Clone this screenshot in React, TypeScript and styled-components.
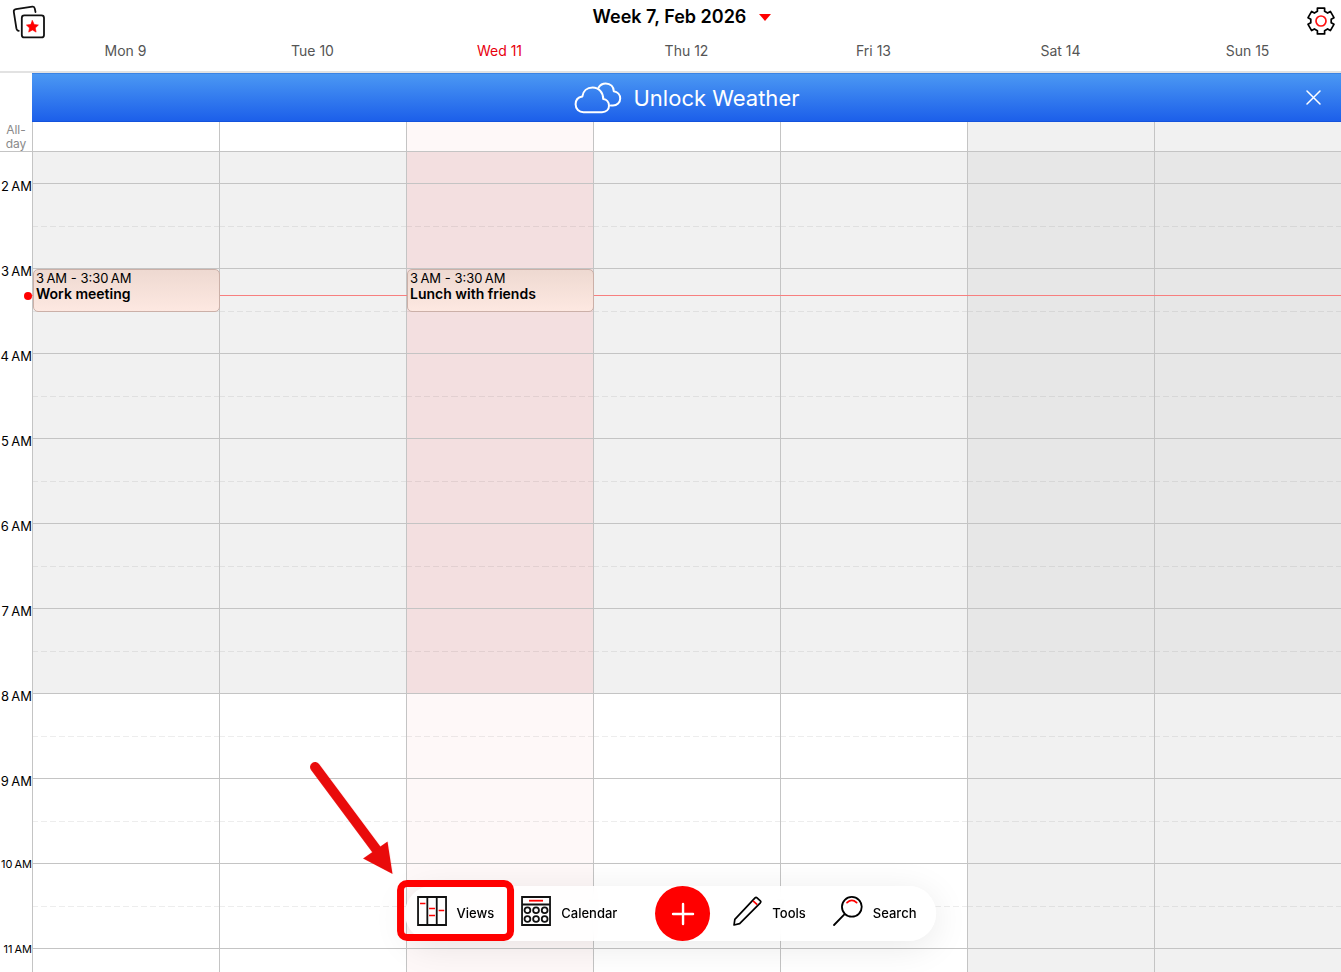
import React from "react";
import styled, { createGlobalStyle, css } from "styled-components";

const GlobalStyle = createGlobalStyle`
  *, *::before, *::after { box-sizing: border-box; }
  body {
    margin: 0;
    background: #fff;
    color: #000;
    font-family: Inter, Roboto, "Liberation Sans", sans-serif;
  }
  button {
    font: inherit;
    color: inherit;
    background: none;
    border: 0;
    padding: 0;
    cursor: pointer;
  }
  svg { display: block; flex: none; }
`;

type Tone = "plain" | "today" | "weekend";

const tones: Record<Tone, { open: string; closed: string }> = {
  plain: { open: "#ffffff", closed: "#f1f1f1" },
  today: { open: "#fef8f8", closed: "#f3dfe0" },
  weekend: { open: "#f1f1f1", closed: "#e7e7e7" },
};

const RED = "#ff0000";
const LINE = "#c4c4c4";
const HOUR = 85;
const LEAD = 32;

interface CalEvent {
  time: string;
  title: string;
  start: number;
  hours: number;
}

interface Day {
  label: string;
  tone: Tone;
  events: CalEvent[];
}

const SLOT = "3\u2009AM - 3:30\u2009AM";

const days: Day[] = [
  { label: "Mon 9", tone: "plain", events: [{ time: SLOT, title: "Work meeting", start: 3, hours: 0.5 }] },
  { label: "Tue 10", tone: "plain", events: [] },
  { label: "Wed 11", tone: "today", events: [{ time: SLOT, title: "Lunch with friends", start: 3, hours: 0.5 }] },
  { label: "Thu 12", tone: "plain", events: [] },
  { label: "Fri 13", tone: "plain", events: [] },
  { label: "Sat 14", tone: "weekend", events: [] },
  { label: "Sun 15", tone: "weekend", events: [] },
];

const hours = [2, 3, 4, 5, 6, 7, 8, 9, 10, 11];
const WORK_START = 8;

const offsetOf = (hour: number) => LEAD + (hour - 2) * HOUR;

const Page = styled.div`
  display: flex;
  flex-direction: column;
  height: 100vh;
  overflow: hidden;
`;

const Header = styled.header`
  flex: none;
  height: 73px;
  border-bottom: 2px solid #e2e2e2;
`;

const TitleBar = styled.div`
  display: grid;
  grid-template-columns: 1fr auto 1fr;
  height: 40px;
  padding: 5px 5px 0 12px;
`;

const IconButton = styled.button<{ $end?: boolean }>`
  justify-self: ${(p) => (p.$end ? "end" : "start")};
  align-self: start;
`;

const PeriodButton = styled.button`
  display: flex;
  align-items: center;
  gap: 13px;
  height: 24px;
  margin-left: 16px;
  font-size: 18px;
  font-weight: 600;
  line-height: 24px;
`;

const weekColumns = css`
  display: grid;
  grid-template-columns: repeat(7, 1fr);
`;

const DayNames = styled.div`
  ${weekColumns}
  margin-left: 32px;
`;

const DayName = styled.div<{ $today: boolean }>`
  text-align: center;
  font-size: 14px;
  line-height: 22px;
  color: ${(p) => (p.$today ? "#e8000d" : "#555")};
`;

const Banner = styled.section`
  flex: none;
  display: grid;
  grid-template-columns: 1fr auto 1fr;
  align-items: center;
  height: 49px;
  margin-left: 32px;
  color: #fff;
  background: linear-gradient(#4b98f3, #1c5fea);
  border-top: 1px solid #3a83e4;
  border-bottom: 1px solid #1453dc;
`;

const BannerAction = styled.button`
  grid-column: 2;
  display: flex;
  align-items: center;
  gap: 12px;
  font-size: 22px;
  line-height: 28px;
`;

const CloseButton = styled.button`
  justify-self: end;
  margin-right: 20px;
`;

const AllDayRow = styled.div`
  flex: none;
  display: grid;
  grid-template-columns: 32px 1fr;
  height: 30px;
  border-bottom: 1px solid ${LINE};
`;

const AllDayLabel = styled.div`
  padding-top: 1px;
  text-align: center;
  font-size: 12px;
  line-height: 14px;
  color: #8a8a8a;
`;

const Week = styled.div`
  ${weekColumns}
`;

const AllDayCell = styled.div<{ $tone: Tone }>`
  border-left: 1px solid ${LINE};
  background: ${(p) => tones[p.$tone].open};
`;

const Schedule = styled.main`
  position: relative;
  flex: 1;
  min-height: 0;
  display: grid;
  grid-template-columns: 32px 1fr;
  overflow: hidden;
`;

const Gutter = styled.div`
  padding-top: 26px;
`;

const HourLabel = styled.div<{ $small: boolean }>`
  height: ${HOUR}px;
  text-align: right;
  white-space: nowrap;
  font-size: ${(p) => (p.$small ? 11 : 13)}px;
  line-height: ${(p) => (p.$small ? 12 : 16)}px;
`;

const DayColumn = styled.div<{ $tone: Tone }>`
  position: relative;
  border-left: 1px solid ${LINE};
  background: ${(p) => tones[p.$tone].open};
`;

const HourCell = styled.div<{ $tone: Tone; $closed: boolean; $lead?: boolean }>`
  display: flex;
  flex-direction: column;
  height: ${(p) => (p.$lead ? LEAD : HOUR)}px;
  border-bottom: 1px solid ${LINE};
  background: ${(p) => tones[p.$tone][p.$closed ? "closed" : "open"]};
`;

const HalfHour = styled.div`
  height: 43px;
  border-bottom: 1px solid transparent;
  border-image: repeating-linear-gradient(90deg, rgba(0, 0, 0, 0.07) 0 6px, transparent 6px 9px) 1;
  border-image-width: 0 0 1px 0;
`;

const EventCard = styled.button<{ $start: number; $hours: number }>`
  position: absolute;
  top: ${(p) => offsetOf(p.$start)}px;
  left: 0;
  right: -1px;
  height: ${(p) => Math.round(p.$hours * HOUR)}px;
  z-index: 1;
  display: flex;
  flex-direction: column;
  justify-content: flex-start;
  padding: 0 2px;
  text-align: left;
  font-size: 13px;
  line-height: 16px;
  background: linear-gradient(#eed9d1, #fde8e1);
  border: 1px solid #cbb0a8;
  border-radius: 5px;
`;

const EventTitle = styled.strong`
  font-size: 14px;
  font-weight: 600;
`;

const NowLine = styled.div`
  position: absolute;
  top: 143px;
  left: 32px;
  right: 0;
  height: 1px;
  background: #f77f7f;

  &::before {
    content: "";
    position: absolute;
    top: -3px;
    left: -8px;
    width: 8px;
    height: 8px;
    border-radius: 50%;
    background: ${RED};
  }
`;

const Toolbar = styled.nav`
  position: fixed;
  bottom: 31px;
  left: 50%;
  transform: translateX(-50%);
  z-index: 2;
  display: flex;
  align-items: center;
  gap: 27px;
  height: 55px;
  padding: 0 20px 0 12px;
  border-radius: 28px;
  background: rgba(255, 255, 255, 0.82);
  backdrop-filter: blur(6px);
  box-shadow: 0 6px 36px rgba(0, 0, 0, 0.09);
`;

const ToolButton = styled.button`
  position: relative;
  display: flex;
  align-items: center;
  gap: 10px;
  padding-bottom: 1px;
  font-size: 13px;
  font-weight: 500;
  line-height: 16px;

  svg { margin-bottom: 4px; }
`;

const AddButton = styled.button`
  display: grid;
  place-items: center;
  width: 55px;
  height: 55px;
  margin: 0 -4px 0 11px;
  border-radius: 50%;
  background: ${RED};
`;

const Highlight = styled.span`
  position: absolute;
  inset: -16px -20px -10px -20px;
  border: 7px solid ${RED};
  border-radius: 10px;
  pointer-events: none;
`;

const Pointer = styled.span`
  position: absolute;
  right: 100%;
  bottom: 100%;
  margin: 0 24px 21px 0;
  pointer-events: none;

  svg { margin: 0; }
`;

const CardsIcon = () => (
  <svg width="34" height="34" viewBox="0 0 34 34" fill="none" stroke="#111" strokeWidth="1.8" strokeLinecap="round">
    <path d="M23.5 7 22.8 3.6C22.5 2 21.8 1.4 20.4 1.6L4 4.2C2.2 4.5 1.6 5.4 1.8 6.8L4.4 23.4C4.7 25 5.3 25.8 6.8 25.8" />
    <rect x="9.8" y="10.4" width="22.2" height="22" rx="2.5" fill="#fff" />
    <path
      d="M20.4 15.6 22.2 19.5 26.4 20 23.3 22.9 24.1 27.1 20.4 25 16.7 27.1 17.5 22.9 14.4 20 18.6 19.5Z"
      fill={RED}
      stroke={RED}
      strokeWidth="0.6"
    />
  </svg>
);

const gearPoints = Array.from({ length: 6 }, (_, i) => {
  const a = (i * Math.PI) / 3;
  const tooth = [[-3.6, -9.7], [-3.6, -12.9], [3.6, -12.9], [3.6, -9.7]];
  return tooth
    .map(([x, y]) => `${(x * Math.cos(a) - y * Math.sin(a)).toFixed(2)},${(x * Math.sin(a) + y * Math.cos(a)).toFixed(2)}`)
    .join(" ");
}).join(" ");

const GearIcon = () => (
  <svg width="30" height="32" viewBox="-15 -16 30 32" fill="none" strokeWidth="1.7">
    <polygon points={gearPoints} stroke="#000" strokeLinejoin="round" />
    <circle r="5" stroke="#f11" />
  </svg>
);

const CloudsIcon = () => (
  <svg width="48" height="32" viewBox="0 0 48 32" fill="none" stroke="#fff" strokeWidth="2" strokeLinecap="round" strokeLinejoin="round">
    <path d="M9.500 30.200H28C32.200 30.200 35 27.400 35 23.800 35 20.200 32.600 17.400 29.200 17 29.200 10.500 25 5.600 18.600 5.600 13 5.600 9 9 8.300 14.600 4.300 15.300 1.600 18.300 1.600 22.300 1.600 27 5 30.200 9.500 30.200Z" />
    <path d="M24.600 5.400C26 3 28.500 1.400 31.800 1.400 36.500 1.400 39.800 4.800 39.800 9.300 43.500 9.800 46.200 12.600 46.200 16.500 46.200 20.500 43 23.500 39 23.500H36.700" />
  </svg>
);

const CloseIcon = () => (
  <svg width="15" height="15" viewBox="0 0 15 15" stroke="#fff" strokeWidth="1.5" strokeLinecap="round">
    <path d="M1 1 14 14M14 1 1 14" />
  </svg>
);

const ViewsIcon = () => (
  <svg width="30" height="30" viewBox="0 0 30 30" fill="none" stroke="#111" strokeWidth="1.8">
    <path d="M1 1H29V29H1ZM10.3 1V29M19.700 1V29" />
    <path d="M3 7.500H8.400M12 12.500H18M12 19.500H18M21.600 14.500H27.200" stroke={RED} strokeWidth="1.4" />
  </svg>
);

const CalendarIcon = () => (
  <svg width="30" height="30" viewBox="0 0 30 30" fill="none" stroke="#111" strokeWidth="1.8">
    <path d="M1 1H29V29H1ZM1 8.500H29" />
    <path d="M8 4.700H22" stroke={RED} />
    {[6.4, 15, 23.6].map((x) =>
      [14.3, 23].map((y) => <circle key={`${x}-${y}`} cx={x} cy={y} r="2.9" />)
    )}
  </svg>
);

const PlusIcon = () => (
  <svg width="24" height="24" viewBox="0 0 24 24" stroke="#fff" strokeWidth="2.4" strokeLinecap="round">
    <path d="M12 2V22M2 12H22" />
  </svg>
);

const PencilIcon = () => (
  <svg width="29" height="30" viewBox="0 0 29 30" fill="none" stroke="#000" strokeWidth="1.7" strokeLinejoin="round">
    <path d="M1 29 1.800 23.400 22 1.800Q23 .9 24 1.800L27.300 4.800Q28.200 5.800 27.300 6.800L6.600 27.600Z" />
    <path d="M20 4.800 24.200 8.700" stroke={RED} />
  </svg>
);

const SearchIcon = () => (
  <svg width="30" height="30" viewBox="0 0 30 30" fill="none" stroke="#000" strokeWidth="1.8" strokeLinecap="round">
    <circle cx="18.8" cy="10.8" r="9.900" />
    <path d="M11.600 18.200 1 29" />
    <path d="M14 6.600Q18.800 2.200 23.600 6.600" stroke={RED} />
  </svg>
);

const ArrowDrawing = () => (
  <svg width="84" height="114" viewBox="0 0 84 114">
    <path d="M6 6 67 88" stroke="#e90b0b" strokeWidth="10" strokeLinecap="round" />
    <path d="M54 97.500 78.500 80.500 83.500 113Z" fill="#e90b0b" />
  </svg>
);

export default function App() {
  return (
    <Page>
      <GlobalStyle />
      <Header>
        <TitleBar>
          <IconButton aria-label="Templates"><CardsIcon /></IconButton>
          <PeriodButton>
            Week 7, Feb 2026
            <svg width="12" height="7" viewBox="0 0 12 7"><path d="M0 0H12L6 7Z" fill={RED} /></svg>
          </PeriodButton>
          <IconButton $end aria-label="Settings"><GearIcon /></IconButton>
        </TitleBar>
        <DayNames>
          {days.map((d) => (
            <DayName key={d.label} $today={d.tone === "today"}>{d.label}</DayName>
          ))}
        </DayNames>
      </Header>

      <Banner>
        <BannerAction><CloudsIcon />Unlock Weather</BannerAction>
        <CloseButton aria-label="Close"><CloseIcon /></CloseButton>
      </Banner>

      <AllDayRow>
        <AllDayLabel>All-<br />day</AllDayLabel>
        <Week>
          {days.map((d) => <AllDayCell key={d.label} $tone={d.tone} />)}
        </Week>
      </AllDayRow>

      <Schedule>
        <Gutter>
          {hours.map((h) => (
            <HourLabel key={h} $small={h > 9}>{`${h}\u2009AM`}</HourLabel>
          ))}
        </Gutter>
        <Week>
          {days.map((d) => (
            <DayColumn key={d.label} $tone={d.tone}>
              <HourCell $tone={d.tone} $closed $lead />
              {hours.map((h) => (
                <HourCell key={h} $tone={d.tone} $closed={h < WORK_START}>
                  <HalfHour />
                </HourCell>
              ))}
              {d.events.map((e) => (
                <EventCard key={e.title} $start={e.start} $hours={e.hours}>
                  <span>{e.time}</span>
                  <EventTitle>{e.title}</EventTitle>
                </EventCard>
              ))}
            </DayColumn>
          ))}
        </Week>
        <NowLine />
      </Schedule>

      <Toolbar>
        <ToolButton>
          <ViewsIcon />Views
          <Highlight />
          <Pointer><ArrowDrawing /></Pointer>
        </ToolButton>
        <ToolButton><CalendarIcon />Calendar</ToolButton>
        <AddButton aria-label="Add"><PlusIcon /></AddButton>
        <ToolButton><PencilIcon />Tools</ToolButton>
        <ToolButton><SearchIcon />Search</ToolButton>
      </Toolbar>
    </Page>
  );
}
